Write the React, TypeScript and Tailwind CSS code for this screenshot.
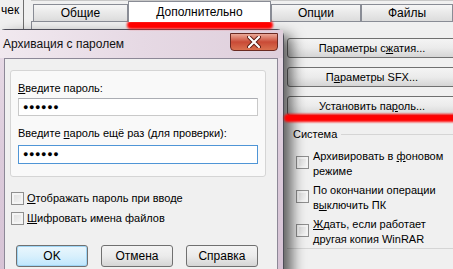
import React from 'react'

// Старое окно WinRAR на фоне + поверх диалог «Архивация с паролем»

function Tab({ label, active, w }: { label: string; active?: boolean; w: string }) {
  if (active) {
    return (
      <div className={`${w} h-[21px] -mb-px flex items-center justify-center border border-b-0 border-[#898c95] bg-white z-10`}>
        {label}
      </div>
    )
  }
  return (
    <div className={`${w} h-[18px] mt-[3px] flex items-center justify-center border border-[#898c95] bg-gradient-to-b from-[#f6f6f6] to-[#dcdcdc]`}>
      {label}
    </div>
  )
}

function WinButton({ children, className = '' }: { children: React.ReactNode; className?: string }) {
  return (
    <div className={`flex items-center justify-center rounded-[3px] border border-[#707070] bg-gradient-to-b from-[#f4f4f4] via-[#ebebeb] to-[#d5d5d5] ${className}`}>
      {children}
    </div>
  )
}

function Box({ className = '' }: { className?: string }) {
  return (
    <span className={`inline-block w-[13px] h-[13px] shrink-0 border border-[#8f8f8f] bg-gradient-to-br from-[#dcdcdc] to-[#f8f8f8] shadow-[inset_0_0_0_2px_#f4f4f4] ${className}`} />
  )
}

function BackWindow() {
  return (
    <div className="absolute inset-0 flex">
      <div className="w-[31px] shrink-0 flex">
        <div className="w-[24px] border-r border-[#6f6f6f] overflow-hidden">
          <div className="mt-[3px] ml-[1px] leading-[14px] text-[12px]">чек</div>
        </div>
      </div>
      <div className="flex-1 flex flex-col min-w-0">
        <div className="h-[21px] shrink-0 flex pl-[2px] border-t border-[#c8c8c8] text-[12px]">
          <Tab label="Общие" w="w-[97px]" />
          <Tab label="Дополнительно" active w="w-[146px]" />
          <Tab label="Опции" w="w-[92px]" />
          <Tab label="Файлы" w="w-[92px] shrink-0" />
        </div>
        <div className="flex-1 flex border-t border-l border-[#898c95] bg-[#f0f0f0]">
          <div className="w-[255px] shrink-0" />
          <div className="flex flex-col pt-[16px] w-[170px] shrink-0">
            <WinButton className="h-[20px]">
              Параметры с<u>ж</u>атия...
            </WinButton>
            <WinButton className="h-[20px] mt-[9px]">
              П<u>а</u>раметры SFX...
            </WinButton>
            <WinButton className="h-[20px] mt-[9px]">
              Установить па<u>р</u>оль...
            </WinButton>
            <div className="mt-[11px] flex items-center h-[14px]">
              <span className="pl-[6px] pr-[4px]">Система</span>
              <span className="flex-1 h-px bg-[#d5d5d5]" />
            </div>
            <div className="flex flex-col gap-[4px] pl-[9px] pt-[8px] leading-[15px] h-[108px] border-b border-[#d5d5d5]">
              <div className="flex items-start gap-[4px]">
                <Box className="mt-[7px]" />
                <span>Архивировать в <u>ф</u>оновом<br />режиме</span>
              </div>
              <div className="flex items-start gap-[4px]">
                <Box className="mt-[7px]" />
                <span>По окончании операции<br />в<u>ы</u>ключить ПК</span>
              </div>
              <div className="flex items-start gap-[4px]">
                <Box className="mt-[7px]" />
                <span><u>Ж</u>дать, если работает<br />другая копия WinRAR</span>
              </div>
            </div>
          </div>
        </div>
      </div>
    </div>
  )
}

function CloseButton() {
  return (
    <div className="absolute left-[231px] top-[3px] w-[48px] h-[18px] rounded-b-[4px] border border-[#6b2a22] bg-gradient-to-b from-[#eaa898] via-[#c94a36] to-[#d9704f] flex items-center justify-center">
      <svg width="14" height="12" viewBox="0 0 14 12">
        <path d="M2 1 L12 11 M12 1 L2 11" stroke="#5a1a12" strokeWidth="4" strokeLinecap="round" />
        <path d="M2 1 L12 11 M12 1 L2 11" stroke="#ffffff" strokeWidth="2.2" strokeLinecap="round" />
      </svg>
    </div>
  )
}

function Dots() {
  return <span className="text-[9px] tracking-[0.6px] leading-none">●●●●●●</span>
}

function Dialog() {
  return (
    <div className="absolute left-[-2px] top-[29px] w-[286px] h-[250px] rounded-t-[7px] border border-[#4d4d58] bg-gradient-to-b from-[#e9dde8] via-[#dccbdb] to-[#d6c3d5] shadow-[8px_6px_14px_rgba(0,0,0,0.6)] flex flex-col">
      <div className="h-[28px] shrink-0 flex items-center pl-[4px] text-[12px] text-[#111] bg-gradient-to-r from-[#f1e9ef] via-[#e6d9e4] to-[#dfcfdc]">
        Архивация с паролем
      </div>
      <CloseButton />
      <div className="flex-1 ml-[5px] mr-[5px] border border-[#8d8897] bg-[#f0f0f0] flex flex-col">
        <div className="ml-[5px] mt-[11px] w-[256px] h-[107px] rounded-[3px] border border-[#d5d5d5] bg-[#f9f9f9] flex flex-col pl-[7px] pt-[10px]">
          <div className="leading-[15px]"><u>В</u>ведите пароль:</div>
          <div className="mt-[2px] w-[240px] h-[18px] border border-[#c9c9c9] border-t-[#abadb3] bg-white flex items-center pl-[4px]">
            <Dots />
          </div>
          <div className="mt-[10px] leading-[15px]">Введите <u>п</u>ароль ещё раз (для проверки):</div>
          <div className="mt-[4px] w-[240px] h-[19px] border border-[#4f95d6] bg-white flex items-center pl-[4px]">
            <Dots />
          </div>
        </div>
        <div className="mt-[15px] ml-[6px] flex flex-col gap-[7px] leading-[13px]">
          <div className="flex items-center gap-[3px]">
            <Box />
            <span><u>О</u>тображать пароль при вводе</span>
          </div>
          <div className="flex items-center gap-[3px]">
            <Box />
            <span><u>Ш</u>ифровать имена файлов</span>
          </div>
        </div>
        <div className="mt-[20px] ml-[11px] flex gap-[13px] text-[12px]">
          <WinButton className="w-[72px] h-[22px] border-[#3c7fb1] shadow-[inset_0_0_0_1px_#9fd5f5] !from-[#eaf6fd] !via-[#d9f0fc] !to-[#bee6fd]">OK</WinButton>
          <WinButton className="w-[72px] h-[22px]">Отмена</WinButton>
          <WinButton className="w-[72px] h-[22px]">Справка</WinButton>
        </div>
      </div>
    </div>
  )
}

function Marks() {
  return (
    <>
      <div className="absolute left-[127px] top-[21px] w-[146px] h-[8px] rounded-full bg-[#ff0000] blur-[1px]" />
      <div className="absolute left-[284px] top-[114px] w-[175px] h-[8px] rounded-full bg-[#ff0000] blur-[1px]" />
    </>
  )
}

export default function App() {
  return (
    <div className="relative w-[453px] h-[269px] overflow-hidden bg-[#f0f0f0] text-[11px] text-black font-['Liberation_Sans',sans-serif]">
      <BackWindow />
      <Dialog />
      <Marks />
    </div>
  )
}
